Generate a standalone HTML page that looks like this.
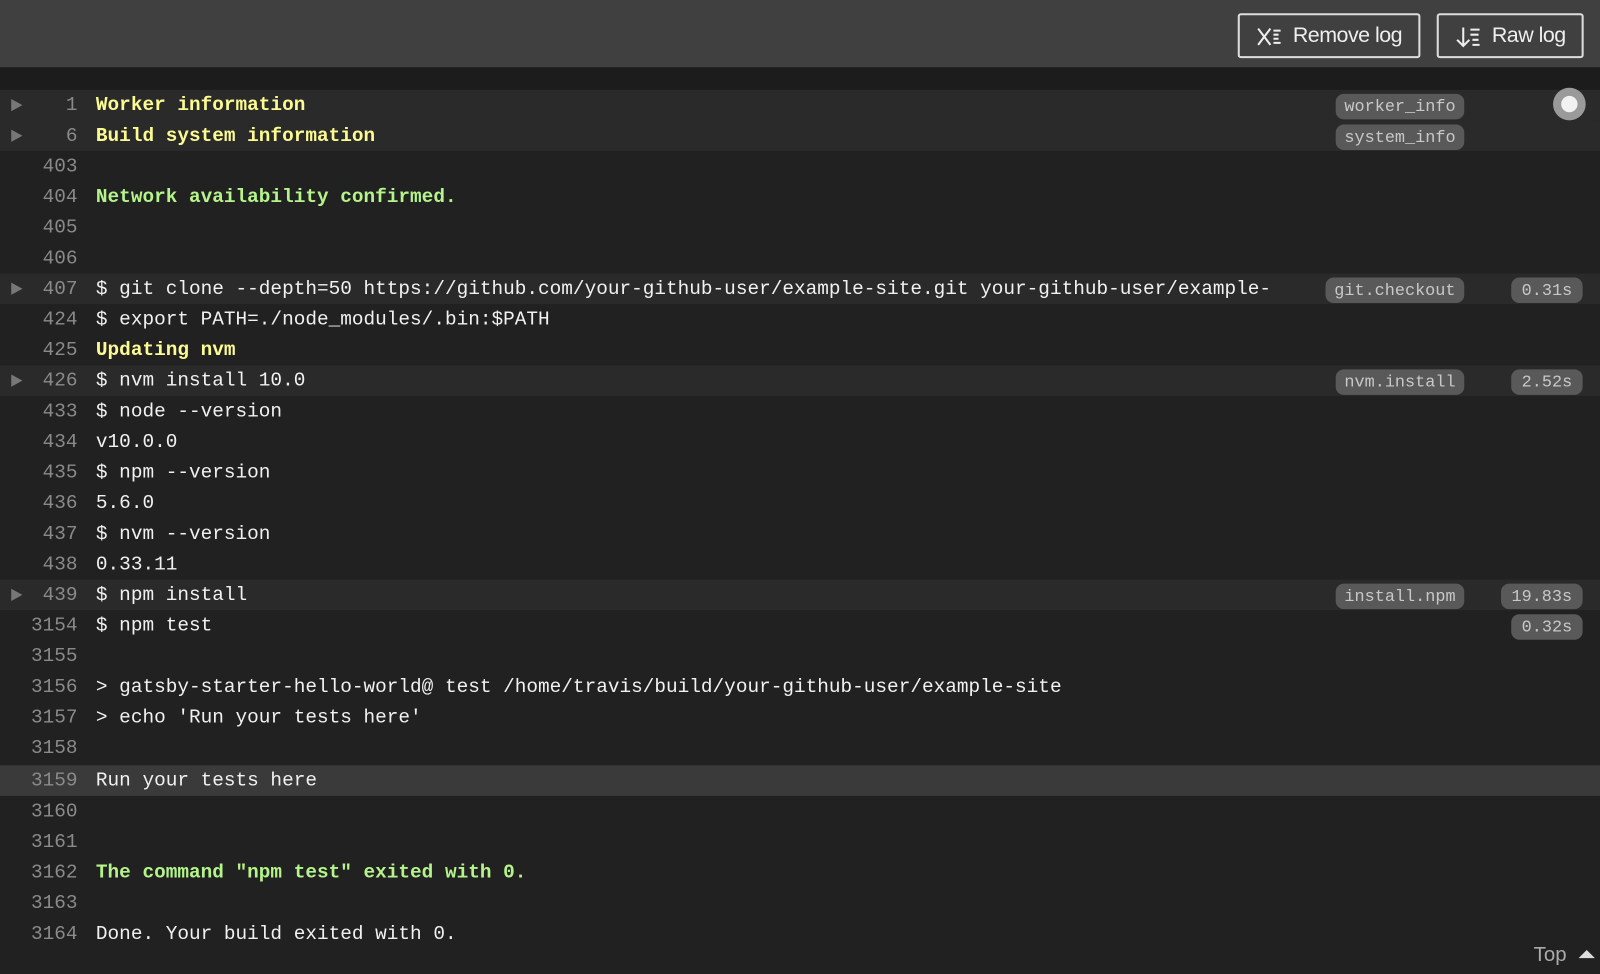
<!DOCTYPE html>
<html><head><style>
body{margin:0;width:1600px;height:974px;background:#212121;overflow:hidden;font-family:"Liberation Mono",monospace;position:relative}
#w{position:absolute;left:0;top:0;width:1568px;height:955px;transform:scale(1.0204);transform-origin:0 0}
.hdr{position:absolute;left:0;top:0;width:1568px;height:66px;background:#404040}
.band{position:absolute;left:0;top:66px;width:1568px;height:22px;background:#1c1c1c}
.btn{position:absolute;top:13px;height:44px;border:2px solid #ddd;border-radius:3px;box-sizing:border-box;color:#eee;font-family:"Liberation Sans",sans-serif;font-size:21px;line-height:40px;letter-spacing:-0.5px}
.btn svg{position:absolute;left:16px;top:10px}
.row{position:absolute;left:0;width:1568px;height:30px;font-size:19px;line-height:31px;color:#f1f1f1;white-space:pre}
.f{background:#2a2a2a}
.hl{background:#3a3a3a}
.n{position:absolute;left:0;width:76px;text-align:right;color:#8a8a8a}
.t{position:absolute;left:94px}
.y{color:#fbfb92;font-weight:bold}
.g{color:#b4f48a;font-weight:bold}
.ar{position:absolute;left:11px;top:9px;width:0;height:0;border-left:11px solid #777;border-top:6px solid transparent;border-bottom:6px solid transparent}
.b{position:absolute;top:4px;height:25px;line-height:25px;border-radius:8px;background:#595959;color:#c8c8c8;font-size:16.5px;text-align:center}
</style></head><body><div id="w">
<div class="hdr"></div><div class="band"></div>
<div class="btn" style="left:1213px;width:179px"><svg width="26" height="22" viewBox="0 0 26 22" fill="none" stroke="#eee" stroke-width="2"><path d="M2 3l12 16M14 3L2 19M17 5h7M17 9h5M17 13h5M17 17h7"/></svg><span style="position:absolute;left:52px">Remove log</span></div>
<div class="btn" style="left:1408px;width:144px"><svg width="26" height="22" viewBox="0 0 26 22" fill="none" stroke="#eee" stroke-width="2"><path d="M8 2v18M2 14l6 6 6-6M15 4h9M15 9h8M17 14h6M17 19h7"/></svg><span style="position:absolute;left:52px">Raw log</span></div>

<div class="row f" style="top:88px"><i class="ar"></i><span class="n">1</span><span class="t y">Worker information</span><span class="b" style="left:1309px;width:126px">worker_info</span></div>
<div class="row f" style="top:118px"><i class="ar"></i><span class="n">6</span><span class="t y">Build system information</span><span class="b" style="left:1309px;width:126px">system_info</span></div>
<div class="row" style="top:148px"><span class="n">403</span></div>
<div class="row" style="top:178px"><span class="n">404</span><span class="t g">Network availability confirmed.</span></div>
<div class="row" style="top:208px"><span class="n">405</span></div>
<div class="row" style="top:238px"><span class="n">406</span></div>
<div class="row f" style="top:268px"><i class="ar"></i><span class="n">407</span><span class="t">$ git clone --depth=50 https://github.com/your-github-user/example-site.git your-github-user/example-</span><span class="b" style="left:1299px;width:136px">git.checkout</span><span class="b" style="left:1481px;width:70px">0.31s</span></div>
<div class="row" style="top:298px"><span class="n">424</span><span class="t">$ export PATH=./node_modules/.bin:$PATH</span></div>
<div class="row" style="top:328px"><span class="n">425</span><span class="t y">Updating nvm</span></div>
<div class="row f" style="top:358px"><i class="ar"></i><span class="n">426</span><span class="t">$ nvm install 10.0</span><span class="b" style="left:1309px;width:126px">nvm.install</span><span class="b" style="left:1481px;width:70px">2.52s</span></div>
<div class="row" style="top:388px"><span class="n">433</span><span class="t">$ node --version</span></div>
<div class="row" style="top:418px"><span class="n">434</span><span class="t">v10.0.0</span></div>
<div class="row" style="top:448px"><span class="n">435</span><span class="t">$ npm --version</span></div>
<div class="row" style="top:478px"><span class="n">436</span><span class="t">5.6.0</span></div>
<div class="row" style="top:508px"><span class="n">437</span><span class="t">$ nvm --version</span></div>
<div class="row" style="top:538px"><span class="n">438</span><span class="t">0.33.11</span></div>
<div class="row f" style="top:568px"><i class="ar"></i><span class="n">439</span><span class="t">$ npm install</span><span class="b" style="left:1309px;width:126px">install.npm</span><span class="b" style="left:1471px;width:80px">19.83s</span></div>
<div class="row" style="top:598px"><span class="n">3154</span><span class="t">$ npm test</span><span class="b" style="left:1481px;width:70px">0.32s</span></div>
<div class="row" style="top:628px"><span class="n">3155</span></div>
<div class="row" style="top:658px"><span class="n">3156</span><span class="t">&gt; gatsby-starter-hello-world@ test /home/travis/build/your-github-user/example-site</span></div>
<div class="row" style="top:688px"><span class="n">3157</span><span class="t">&gt; echo 'Run your tests here'</span></div>
<div class="row" style="top:718px"><span class="n">3158</span></div>
<div class="row hl" style="top:750px"><span class="n">3159</span><span class="t">Run your tests here</span></div>
<div class="row" style="top:780px"><span class="n">3160</span></div>
<div class="row" style="top:810px"><span class="n">3161</span></div>
<div class="row" style="top:840px"><span class="n">3162</span><span class="t g">The command "npm test" exited with 0.</span></div>
<div class="row" style="top:870px"><span class="n">3163</span></div>
<div class="row" style="top:900px"><span class="n">3164</span><span class="t">Done. Your build exited with 0.</span></div>
<div style="position:absolute;left:1522px;top:86px;width:32px;height:32px;border-radius:50%;background:#9a9a9a;z-index:5"><div style="position:absolute;left:8px;top:8px;width:16px;height:16px;border-radius:50%;background:#f2f2f2"></div></div>
<div style="position:absolute;left:1503px;top:925px;font-family:'Liberation Sans',sans-serif;font-size:20px;color:#aaa">Top</div>
<div style="position:absolute;left:1547px;top:931px;width:0;height:0;border-left:8px solid transparent;border-right:8px solid transparent;border-bottom:8px solid #ddd"></div>
</div></body></html>
